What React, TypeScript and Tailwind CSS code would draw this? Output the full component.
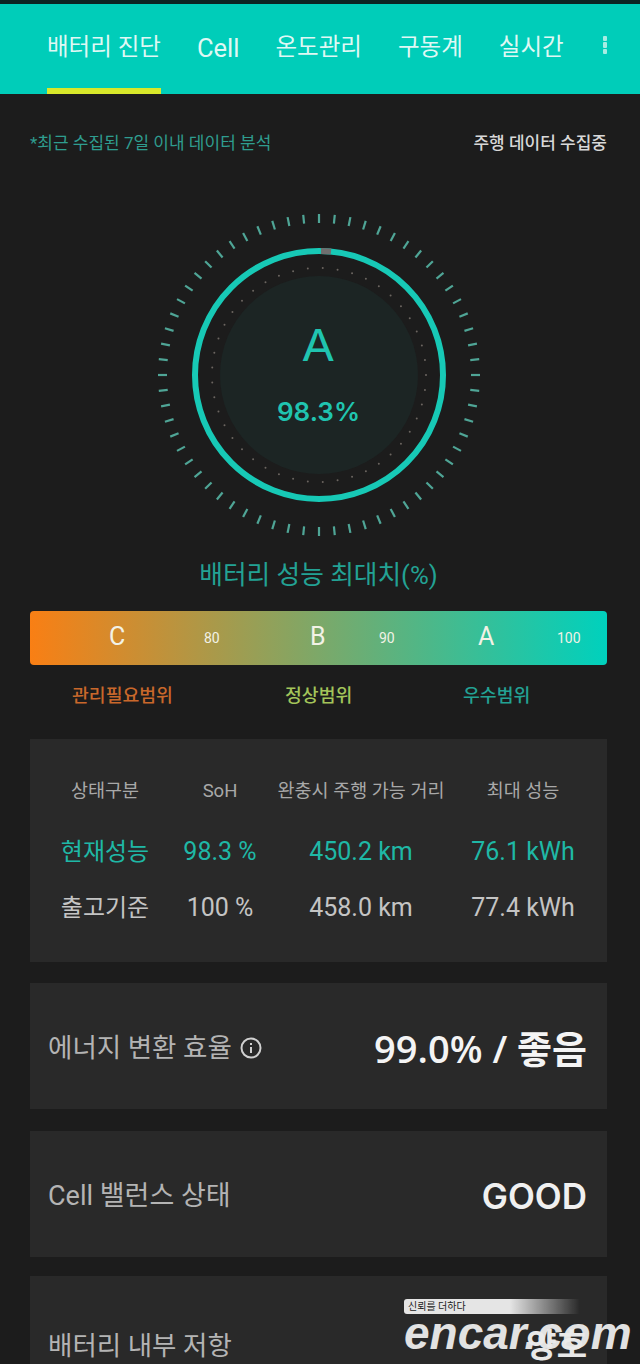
import React from "react";
import { clsx } from "clsx";

const KR = "font-['Roboto','Noto_Sans_CJK_KR',sans-serif]";
const WIDE = "font-['Inter','Noto_Sans_CJK_KR',sans-serif]";

const tabs = ["배터리 진단", "Cell", "온도관리", "구동계", "실시간"];

const rows = [
  { cells: ["현재성능", "98.3 %", "450.2 km", "76.1 kWh"], color: "text-[#1fb8a6]" },
  { cells: ["출고기준", "100 %", "458.0 km", "77.4 kWh"], color: "text-[#c4c4c4]" },
];

const colClass = ["w-[150px]", "w-[80px]", "w-[202px]", "w-[122px]"];

const Gauge = () => {
  const c = 180;
  const ticks = Array.from({ length: 64 });
  const dots = Array.from({ length: 45 });
  return (
    <div className="relative w-[360px] h-[360px] shrink-0">
      <svg width="360" height="360" viewBox="0 0 360 360">
        {ticks.map((_, i) => {
          const a = (i / 64) * Math.PI * 2;
          const r1 = 152;
          const r2 = 161;
          return (
            <line
              key={i}
              x1={c + Math.cos(a) * r1}
              y1={c + Math.sin(a) * r1}
              x2={c + Math.cos(a) * r2}
              y2={c + Math.sin(a) * r2}
              stroke="#4fa596"
              strokeWidth="2.2"
            />
          );
        })}
        {dots.map((_, i) => {
          const a = (i / 45) * Math.PI * 2;
          return (
            <circle
              key={i}
              cx={c + Math.cos(a) * 107}
              cy={c + Math.sin(a) * 107}
              r="1"
              fill="#6b6560"
            />
          );
        })}
        <circle cx={c} cy={c} r="99" fill="#1c2524" />
        <circle cx={c} cy={c} r="124" fill="none" stroke="#17c9b6" strokeWidth="6" />
        <path d="M 182 56 A 124 124 0 0 1 192 56.6" fill="none" stroke="#6f6f6f" strokeWidth="6" />
      </svg>
      <div className="absolute inset-0 flex flex-col items-center text-[#20c4b0]">
        <span className={clsx(WIDE, "mt-[126px] text-[44px] leading-[48px] font-normal scale-x-110")}>A</span>
        <span className={clsx(WIDE, "mt-[28px] text-[26px] leading-[30px] font-semibold")}>98.3%</span>
      </div>
    </div>
  );
};

const InfoCard = ({
  label,
  children,
  className,
}: {
  label: React.ReactNode;
  children: React.ReactNode;
  className?: string;
}) => (
  <div className={clsx("bg-[#292929] pt-[4px] pl-[18px] pr-[20px] flex items-center justify-between", className)}>
    <div className={clsx(KR, "flex items-center gap-2 text-[26.5px] text-[#b4b4b4]")}>{label}</div>
    {children}
  </div>
);

const App = () => {
  return (
    <div className={clsx(KR, "relative w-[640px] h-[1364px] overflow-hidden bg-[#1c1c1c]")}>
      <div className="h-1 bg-[#0b2523]" />
      <div className="h-[90px] bg-[#00cdb9] flex gap-9 pl-[47px]">
        {tabs.map((tab, i) => (
          <div
            key={tab}
            className={clsx(
              "h-full pt-1 border-b-[6px] flex items-center whitespace-nowrap text-[#dff8f4]",
              i === 0 ? "border-[#d8e82a]" : "border-transparent",
              tab === "Cell" ? "text-[25.5px]" : "text-[23.5px]"
            )}
          >
            {tab}
          </div>
        ))}
        <div className="h-full pb-[8px] flex flex-col items-center justify-center gap-[1px] ml-[3px]">
          <span className="w-[4px] h-[5px] rounded-[1px] bg-[#a8ece3]" />
          <span className="w-[4px] h-[6px] rounded-[1px] bg-[#a8ece3]" />
          <span className="w-[4px] h-[5px] rounded-[1px] bg-[#a8ece3]" />
        </div>
      </div>

      <div className="pl-[30px] pr-[33px]">
        <div className="flex justify-between items-center mt-[40px] h-5">
          <p className="text-[17px] text-[#2f9d8f]">*최근 수집된 7일 이내 데이터 분석</p>
          <p className="text-[17px] font-medium text-[#d8d8d8]">주행 데이터 수집중</p>
        </div>

        <div className="flex justify-center mt-[51px] h-[340px] items-center">
          <Gauge />
        </div>

        <p className="mt-[12px] text-center text-[25.7px] leading-[36px] text-[#23a294]">배터리 성능 최대치(%)</p>

        <div className="mt-[18px] h-[54px] rounded-[4px] bg-linear-to-r/srgb from-[#f97f14] to-[#00d1bd] relative text-[#f2f2e6]">
          <span className="absolute left-[79px] top-[11px] text-[25px] leading-[30px]">C</span>
          <span className="absolute left-[174px] top-[18px] text-[14px] leading-[18px]">80</span>
          <span className="absolute left-[280px] top-[11px] text-[25px] leading-[30px]">B</span>
          <span className="absolute left-[349px] top-[18px] text-[14px] leading-[18px]">90</span>
          <span className="absolute left-[448px] top-[11px] text-[25px] leading-[30px]">A</span>
          <span className="absolute left-[527px] top-[18px] text-[14px] leading-[18px]">100</span>
        </div>

        <div className="mt-[19px] h-[24px] flex text-[18.3px] leading-[24px] font-medium">
          <span className="w-[255px] pl-[42px] text-[#c9682b]">관리필요범위</span>
          <span className="w-[178px] text-[#a3c45a]">정상범위</span>
          <span className="text-[#23a294]">우수범위</span>
        </div>

        <div className="mt-[31px] h-[223px] bg-[#292929] pt-[39px] flex flex-col">
          <div className="flex text-center text-[18.5px] leading-[26px] text-[#a8a8a8]">
            {["상태구분", "SoH", "완충시 주행 가능 거리", "최대 성능"].map((h, i) => (
              <span key={h} className={clsx(colClass[i], "whitespace-nowrap")}>
                {h}
              </span>
            ))}
          </div>
          {rows.map((row, r) => (
            <div
              key={row.cells[0]}
              className={clsx("flex text-center leading-[32px]", row.color, r === 0 ? "mt-[32px]" : "mt-[24px]")}
            >
              {row.cells.map((cell, i) => (
                <span key={cell} className={clsx(colClass[i], "whitespace-nowrap", i === 0 ? "text-[24px]" : "text-[25px]")}>
                  {cell}
                </span>
              ))}
            </div>
          ))}
        </div>

        <div className="mt-[21px] flex flex-col gap-[22px]">
          <InfoCard
            className="h-[126px]"
            label={
              <>
                에너지 변환 효율
                <svg width="22" height="22" viewBox="0 0 22 22" fill="none" stroke="#d0d0d0" strokeWidth="2">
                  <circle cx="11" cy="11" r="9.5" />
                  <path d="M11 10v6" />
                  <path d="M11 6v2" />
                </svg>
              </>
            }
          >
            <span className="font-['Open_Sans','Noto_Sans_CJK_KR',sans-serif] text-[38px] font-semibold text-[#f4f4f4]">99.0% / 좋음</span>
          </InfoCard>
          <InfoCard className="h-[126px]" label={<span className="text-[27px]">Cell 밸런스 상태</span>}>
            <span className={clsx(WIDE, "text-[35px] font-semibold text-[#f0f0f0]")}>GOOD</span>
          </InfoCard>
        </div>
        <div className="mt-[19px]">
          <InfoCard className="h-[136px]" label="배터리 내부 저항">
            <span className="text-[33px] font-semibold text-[#e8e8e8]">양호</span>
          </InfoCard>
        </div>
      </div>

      <div className="absolute left-[404px] top-[1299px] w-[232px] opacity-95">
        <div className="h-[15px] w-[176px] rounded-l-[3px] bg-linear-to-r/srgb from-[#f0f0f0] via-[#f0f0f0] via-60% to-transparent pl-1 text-[10px] leading-[15px] text-[#222]">
          신뢰를 더하다
        </div>
        <div className="font-['Liberation_Sans',sans-serif] italic font-bold text-[46px] leading-[38px] text-[#ececec] whitespace-nowrap">
          encar.com
        </div>
      </div>
    </div>
  );
};

export default App;
